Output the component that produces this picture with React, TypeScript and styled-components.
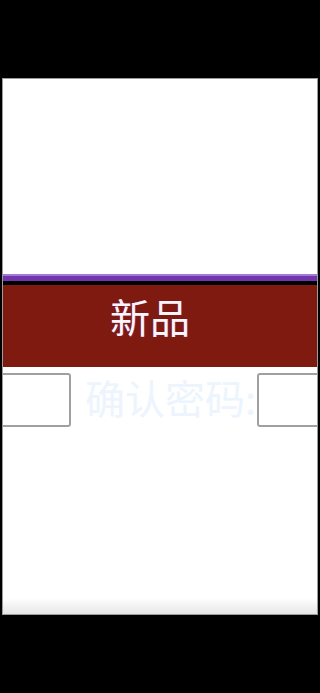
import styled, { createGlobalStyle } from "styled-components";

const GlobalStyle = createGlobalStyle`
  html, body {
    margin: 0;
    padding: 0;
    background: #000;
  }
  body {
    font-family: "Noto Sans CJK SC", "Noto Sans", sans-serif;
  }
`;

const Frame = styled.div`
  box-sizing: border-box;
  margin: 78px 2px 0;
  width: 316px;
  height: 537px;
  border: 1px solid #9c9c9c;
  background: linear-gradient(
    to bottom,
    #fff 0,
    #fff calc(100% - 16px),
    #e6e6e6 100%
  );
  overflow: hidden;
  display: flex;
  flex-direction: column;
`;

const Spacer = styled.div`
  height: 195px;
  flex-shrink: 0;
`;

const Stripe = styled.div`
  flex-shrink: 0;
  margin: 0 -1px;
  height: 7px;
  background: linear-gradient(to bottom, #a678d6 0, #a678d6 2px, #7136ad 2px);
`;

const Rule = styled.div`
  flex-shrink: 0;
  margin: 0 -1px;
  height: 4px;
  background: #000;
`;

const Banner = styled.div`
  box-sizing: border-box;
  flex-shrink: 0;
  margin: 0 -1px;
  height: 82px;
  padding: 2px 20px 0 0;
  background: #7f1a11;
  color: #fbf5fb;
  font-size: 40px;
  text-align: center;
  text-shadow: 1px 0 0 rgba(130, 70, 200, 0.45);
`;

const Row = styled.div`
  display: flex;
  align-items: flex-start;
  margin: 6px 0 0 -72px;
`;

const Field = styled.input`
  flex-shrink: 0;
  box-sizing: border-box;
  width: 140px;
  height: 54px;
  margin: 0;
  padding: 0 6px;
  border: 2px solid #a0a0a0;
  border-radius: 3px;
  background: #fff;
  outline: none;
`;

const Label = styled.span`
  flex-shrink: 0;
  width: 172px;
  margin-left: 14px;
  white-space: nowrap;
  font-size: 40px;
  line-height: 48px;
  color: #ecf4fd;
`;

export default function App() {
  return (
    <>
      <GlobalStyle />
      <Frame>
        <Spacer />
        <Stripe />
        <Rule />
        <Banner>新品</Banner>
        <Row>
          <Field type="text" />
          <Label>确认密码:</Label>
          <Field type="password" />
        </Row>
      </Frame>
    </>
  );
}
